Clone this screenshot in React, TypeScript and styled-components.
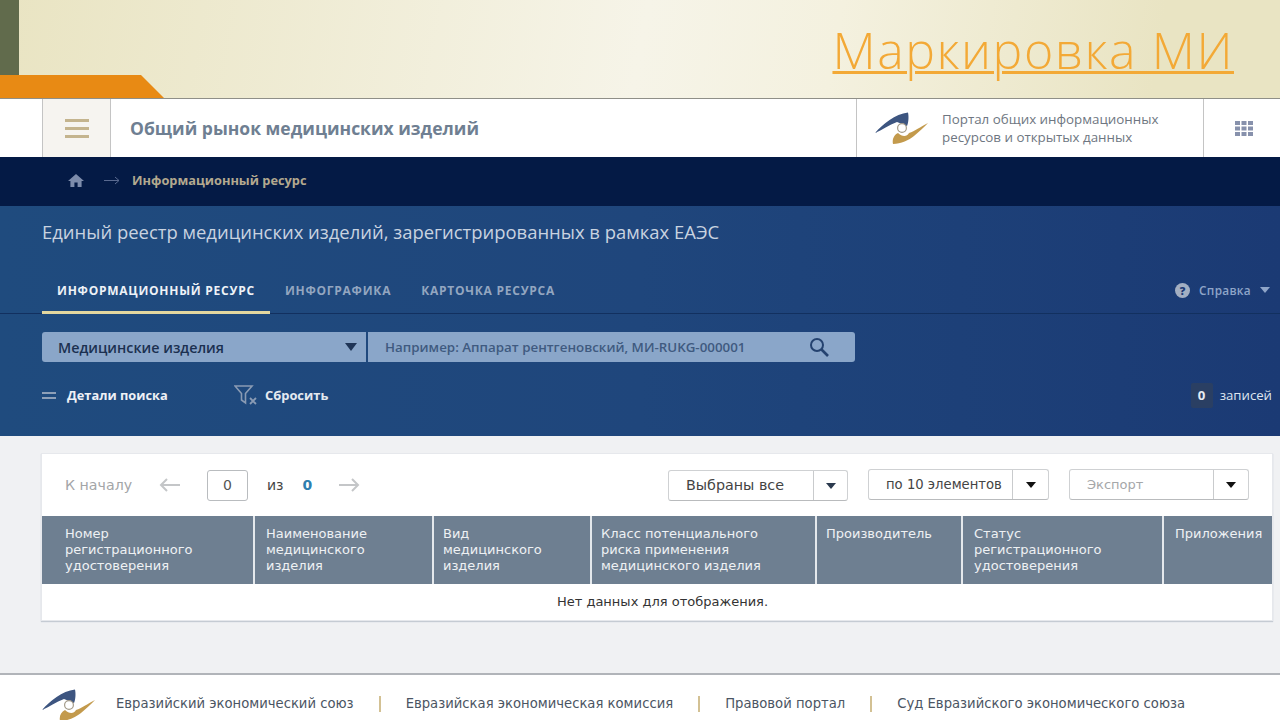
import React from 'react';
import styled, { createGlobalStyle } from 'styled-components';

const GlobalStyle = createGlobalStyle`
  html, body {
    margin: 0;
    padding: 0;
    background: #f0f1f3;
  }
  * {
    box-sizing: border-box;
  }
`;

const Logo = ({ width }: { width: number }) => (
  <svg width={width} viewBox="0 0 54 34" fill="none">
    <path d="M0 22C8 13 20 3 33 1.5C34 6 33.5 12 32 15L27 13L22 11C14 14 7 19 0 22Z" fill="#3d5580" />
    <path
      d="M53 12C45 16 40 20 34 22C32 26 27 26 23 22C19 24 17 28 18 33C26 33 34 29 39 25C44 21 49 16 53 12Z"
      fill="#c39a4c"
    />
    <circle cx="27" cy="17" r="4.4" fill="#fff" stroke="#a39a88" strokeWidth="1.2" />
  </svg>
);

const Caret = styled.span<{ $color?: string; $big?: boolean }>`
  width: 0;
  height: 0;
  border-left: ${(p) => (p.$big ? 6 : 5)}px solid transparent;
  border-right: ${(p) => (p.$big ? 6 : 5)}px solid transparent;
  border-top: ${(p) => (p.$big ? 8 : 6)}px solid ${(p) => p.$color || '#2b3a4e'};
`;

const columns = [
  { title: 'Номер\nрегистрационного\nудостоверения', width: 213, pad: 23 },
  { title: 'Наименование\nмедицинского\nизделия', width: 179, pad: 11 },
  { title: 'Вид\nмедицинского\nизделия', width: 158, pad: 9 },
  { title: 'Класс потенциального\nриска применения\nмедицинского изделия', width: 225, pad: 9 },
  { title: 'Производитель', width: 146, pad: 9 },
  { title: 'Статус\nрегистрационного\nудостоверения', width: 201, pad: 11 },
  { title: 'Приложения', width: 108, pad: 11 },
];

const footerLinks = [
  'Евразийский экономический союз',
  'Евразийская экономическая комиссия',
  'Правовой портал',
  'Суд Евразийского экономического союза',
];

const App = () => {
  return (
    <Page>
      <GlobalStyle />
      <SlideHeader>
        <Corner>
          <GreenStrip />
          <OrangeBar />
        </Corner>
        <SlideTitle>Маркировка МИ</SlideTitle>
      </SlideHeader>

      <TopNav>
        <MenuCell>
          <Burger>
            <i />
            <i />
            <i />
          </Burger>
        </MenuCell>
        <SiteTitle>Общий рынок медицинских изделий</SiteTitle>
        <PortalCell>
          <Logo width={54} />
          <PortalText>
            Портал общих информационных
            <br />
            ресурсов и открытых данных
          </PortalText>
        </PortalCell>
        <AppsCell>
          <svg width="18" height="15" viewBox="0 0 18 15" fill="#8791ac">
            {[0, 6.5, 13].map((x) =>
              [0, 5.5, 11].map((y) => <rect key={`${x}-${y}`} x={x} y={y} width="5" height="4" />),
            )}
          </svg>
        </AppsCell>
      </TopNav>

      <Breadcrumbs>
        <svg width="16" height="13" viewBox="0 0 16 13" fill="#7d8cab">
          <path d="M8 0L16 7H13.6V13H9.6V8.6H6.4V13H2.4V7H0Z" />
        </svg>
        <svg width="16" height="9" viewBox="0 0 16 9" fill="none" stroke="#5a6a90" strokeWidth="1">
          <path d="M0 4.5H15M11 1L15 4.5L11 8" />
        </svg>
        <CrumbText>Информационный ресурс</CrumbText>
      </Breadcrumbs>

      <BluePanel>
        <PanelTitle>Единый реестр медицинских изделий, зарегистрированных в рамках ЕАЭС</PanelTitle>
        <TabsRow>
          <Tab $active>Информационный ресурс</Tab>
          <Tab>Инфографика</Tab>
          <Tab>Карточка ресурса</Tab>
          <Help>
            <HelpMark>?</HelpMark>
            Справка
            <Caret $color="#8fa5c8" />
          </Help>
        </TabsRow>
        <SearchRow>
          <SearchSelect>
            Медицинские изделия
            <Caret $big $color="#1f3557" />
          </SearchSelect>
          <SearchInput>
            Например: Аппарат рентгеновский, МИ-RUKG-000001
            <svg width="20" height="20" viewBox="0 0 20 20" fill="none" stroke="#24426f" strokeWidth="2">
              <circle cx="8" cy="8" r="6" />
              <path d="M12.5 12.5L19 19" strokeWidth="2.6" />
            </svg>
          </SearchInput>
        </SearchRow>
        <ActionsRow>
          <DetailsAction>
            <DetailsIcon>
              <i />
              <i />
            </DetailsIcon>
            Детали поиска
          </DetailsAction>
          <ResetAction>
            <svg width="25" height="20" viewBox="0 0 25 20" fill="none" stroke="#8a9bb4" strokeWidth="1.6">
              <path d="M1 1H18L11.5 8.5V18L7.5 15V8.5Z" />
              <path d="M16 13L22 19M22 13L16 19" strokeWidth="1.8" />
            </svg>
            Сбросить
          </ResetAction>
          <Records>
            <RecordsBadge>0</RecordsBadge>
            записей
          </Records>
        </ActionsRow>
      </BluePanel>

      <Content>
        <Card>
          <Toolbar>
            <ToStart>К началу</ToStart>
            <svg width="22" height="14" viewBox="0 0 22 14" fill="none" stroke="#c4c6c8" strokeWidth="2">
              <path d="M21 7H2M8 1L2 7L8 13" />
            </svg>
            <PageBox>0</PageBox>
            <OfText>из</OfText>
            <OfCount>0</OfCount>
            <svg width="22" height="14" viewBox="0 0 22 14" fill="none" stroke="#c4c6c8" strokeWidth="2">
              <path d="M1 7H20M14 1L20 7L14 13" />
            </svg>
            <Dropdowns>
              <Dropdown $width={180} $shift={1}>
                <DropdownLabel $size={14.3}>Выбраны все</DropdownLabel>
                <DropdownArrow $width={34}>
                  <Caret />
                </DropdownArrow>
              </Dropdown>
              <Dropdown $width={181}>
                <DropdownLabel $size={13.2}>по 10 элементов</DropdownLabel>
                <DropdownArrow $width={36}>
                  <Caret $color="#111" />
                </DropdownArrow>
              </Dropdown>
              <Dropdown $width={180}>
                <DropdownLabel $size={13} $muted>
                  Экспорт
                </DropdownLabel>
                <DropdownArrow $width={35}>
                  <Caret $color="#111" />
                </DropdownArrow>
              </Dropdown>
            </Dropdowns>
          </Toolbar>
          <TableHead>
            {columns.map((col) => (
              <HeadCell key={col.title} $width={col.width} $pad={col.pad}>
                {col.title}
              </HeadCell>
            ))}
          </TableHead>
          <EmptyRow>Нет данных для отображения.</EmptyRow>
        </Card>
      </Content>

      <Footer>
        <FooterLogo>
          <Logo width={54} />
        </FooterLogo>
        {footerLinks.map((link) => (
          <FooterLink key={link}>{link}</FooterLink>
        ))}
      </Footer>
    </Page>
  );
};

const Page = styled.div`
  width: 1280px;
  height: 720px;
  overflow: hidden;
  display: flex;
  flex-direction: column;
  font-family: 'Open Sans', 'Liberation Sans', sans-serif;
`;

const SlideHeader = styled.div`
  height: 99px;
  flex: none;
  display: flex;
  justify-content: space-between;
  border-bottom: 1px solid #8f8f88;
  background: linear-gradient(100deg, #e9e4c2 0%, #f6f4e8 50%, #f4f1df 65%, #e9e4c3 90%);
`;

const Corner = styled.div`
  width: 164px;
  display: flex;
  flex-direction: column;
`;

const GreenStrip = styled.div`
  width: 19px;
  height: 75px;
  background: #616b4c;
`;

const OrangeBar = styled.div`
  height: 23px;
  background: #e88a14;
  clip-path: polygon(0 0, 141px 0, 100% 100%, 0 100%);
`;

const SlideTitle = styled.a`
  margin: 22px 46px 0 0;
  font-family: 'Open Sans', sans-serif;
  font-size: 50px;
  font-weight: 300;
  letter-spacing: 1.55px;
  line-height: 56px;
  height: 56px;
  color: #f3a936;
  text-decoration: underline;
  text-decoration-thickness: 3px;
  text-underline-offset: 2px;
`;

const TopNav = styled.div`
  height: 58px;
  flex: none;
  display: flex;
  align-items: stretch;
  background: #fff;
  padding-left: 42px;
`;

const MenuCell = styled.div`
  width: 69px;
  display: flex;
  align-items: center;
  justify-content: center;
  background: #f6f4f0;
  border-left: 1px solid #c4c4c4;
  border-right: 1px solid #c4c4c4;
`;

const Burger = styled.div`
  width: 24px;
  display: flex;
  flex-direction: column;
  gap: 5px;

  & i {
    display: block;
    height: 3px;
    background: #c4b48e;
  }
`;

const SiteTitle = styled.div`
  flex: 1;
  padding-left: 19px;
  font-size: 17.5px;
  line-height: 58px;
  font-weight: 700;
  color: #6f7f92;
`;

const PortalCell = styled.div`
  width: 348px;
  display: flex;
  align-items: center;
  gap: 13px;
  padding: 0 0 0 18px;
  border-left: 1px solid #c4c4c4;
  border-right: 1px solid #c4c4c4;
`;

const PortalText = styled.div`
  font-size: 13.35px;
  line-height: 18px;
  color: #6e7681;
  white-space: nowrap;
`;

const AppsCell = styled.div`
  width: 76px;
  display: flex;
  align-items: center;
  justify-content: center;
  padding-left: 4px;
`;

const Breadcrumbs = styled.div`
  height: 49px;
  flex: none;
  display: flex;
  align-items: center;
  padding: 0 0 3px 68px;
  gap: 20px;
  background: #041a45;
`;

const CrumbText = styled.span`
  margin-left: -8px;
  font-size: 12.8px;
  font-weight: 700;
  color: #b3a98f;
`;

const BluePanel = styled.div`
  height: 230px;
  flex: none;
  background: linear-gradient(90deg, #1f4b7e 0%, #1f467c 50%, #1b3a74 100%);
`;

const PanelTitle = styled.div`
  padding: 14px 0 0 42px;
  height: 61px;
  font-size: 18.45px;
  line-height: 23px;
  color: #c9d3e0;
  white-space: nowrap;
`;

const TabsRow = styled.div`
  height: 47px;
  display: flex;
  align-items: stretch;
  padding-left: 42px;
  border-bottom: 1px solid #12305f;
`;

const Tab = styled.div<{ $active?: boolean }>`
  padding: 0 15px;
  line-height: 47px;
  height: 47px;
  font-size: 12px;
  font-weight: 700;
  letter-spacing: 0.75px;
  text-transform: uppercase;
  color: ${(p) => (p.$active ? '#eef2f7' : '#93a6c0')};
  border-bottom: ${(p) => (p.$active ? '3px solid #e3d79f' : 'none')};
`;

const Help = styled.div`
  margin-left: auto;
  padding-right: 10px;
  display: flex;
  align-items: center;
  gap: 9px;
  font-size: 11.8px;
  font-weight: 600;
  letter-spacing: 0.3px;
  color: #8fa5c8;
`;

const HelpMark = styled.span`
  width: 15px;
  height: 15px;
  border-radius: 50%;
  background: #a3afc2;
  color: #1c3a74;
  font-size: 11px;
  font-weight: 800;
  line-height: 15px;
  text-align: center;
`;

const SearchRow = styled.div`
  display: flex;
  gap: 2px;
  margin: 18px 0 0 42px;
  width: 813px;
  height: 30px;
`;

const SearchSelect = styled.div`
  width: 324px;
  display: flex;
  align-items: center;
  justify-content: space-between;
  padding: 0 9px 0 16px;
  background: #8aa6c9;
  border-radius: 3px 0 0 3px;
  font-size: 14.3px;
  font-weight: 600;
  color: #1b3050;
`;

const SearchInput = styled.div`
  flex: 1;
  display: flex;
  align-items: center;
  justify-content: space-between;
  padding: 0 26px 0 17px;
  background: #8aa6c9;
  border-radius: 0 3px 3px 0;
  font-size: 13.35px;
  font-weight: 600;
  color: #3f5a80;
`;

const ActionsRow = styled.div`
  display: flex;
  align-items: center;
  height: 40px;
  margin-top: 13px;
  padding-left: 42px;
`;

const DetailsAction = styled.div`
  width: 192px;
  display: flex;
  align-items: center;
  gap: 11px;
  font-size: 12.8px;
  font-weight: 700;
  color: #eef1f6;
`;

const DetailsIcon = styled.span`
  width: 14px;
  display: flex;
  flex-direction: column;
  gap: 3px;

  & i {
    display: block;
    height: 2px;
    background: #8ea0b8;
  }
`;

const ResetAction = styled.div`
  display: flex;
  align-items: center;
  gap: 6px;
  font-size: 12.9px;
  font-weight: 700;
  color: #e4e9f0;
`;

const Records = styled.div`
  margin-left: auto;
  padding-right: 8px;
  display: flex;
  align-items: center;
  gap: 7px;
  font-size: 13.2px;
  color: #dfe6f0;
`;

const RecordsBadge = styled.span`
  width: 22px;
  height: 25px;
  background: #2a3f63;
  border-radius: 2px;
  font-weight: 700;
  line-height: 25px;
  text-align: center;
  color: #e6ebf2;
`;

const Content = styled.div`
  height: 239px;
  flex: none;
  padding: 18px 8px 0 42px;
  background: #f0f1f3;
  border-bottom: 2px solid #b1b4b9;
`;

const Card = styled.div`
  height: 166px;
  background: #fff;
  box-shadow: 0 0 0 1px #e6e8ec, 0 1px 1px 1px #c5cbd3;
  font-family: 'DejaVu Sans', Verdana, sans-serif;
`;

const Toolbar = styled.div`
  height: 62px;
  display: flex;
  align-items: center;
  padding: 0 23px;
`;

const ToStart = styled.span`
  width: 94px;
  font-size: 14.2px;
  color: #a3a5a7;
  white-space: nowrap;
`;

const PageBox = styled.div`
  width: 41px;
  height: 31px;
  margin-left: 26px;
  border: 1px solid #b9bcbf;
  border-radius: 3px;
  font-size: 14px;
  line-height: 28px;
  text-align: center;
  color: #555;
`;

const OfText = styled.span`
  margin-left: 19px;
  font-size: 14px;
  color: #444;
`;

const OfCount = styled.span`
  margin-left: 19px;
  margin-right: 26px;
  font-size: 14px;
  font-weight: 600;
  color: #2f7fb0;
`;

const Dropdowns = styled.div`
  margin-left: auto;
  display: flex;
  gap: 20px;
`;

const Dropdown = styled.div<{ $width: number; $shift?: number }>`
  width: ${(p) => p.$width}px;
  height: 31px;
  margin-top: ${(p) => p.$shift || 0}px;
  display: flex;
  border: 1px solid #cfd1d3;
  border-bottom-color: #b9bbbd;
  border-radius: 3px;
  background: #fff;
`;

const DropdownLabel = styled.div<{ $muted?: boolean; $size: number }>`
  flex: 1;
  padding-left: 17px;
  font-size: ${(p) => p.$size}px;
  line-height: 29px;
  white-space: nowrap;
  color: ${(p) => (p.$muted ? '#a5a7a9' : '#444')};
`;

const DropdownArrow = styled.div<{ $width: number }>`
  width: ${(p) => p.$width}px;
  display: flex;
  align-items: center;
  justify-content: center;
  border-left: 1px solid #c9cbcd;
`;

const TableHead = styled.div`
  height: 68px;
  display: flex;
  background: #6e7f91;
`;

const HeadCell = styled.div<{ $width: number; $pad: number }>`
  width: ${(p) => p.$width}px;
  padding: 10px 0 0 ${(p) => p.$pad}px;
  border-right: 2px solid #e4e8ec;
  font-size: 13px;
  line-height: 16px;
  color: #eef1f4;
  white-space: pre-line;

  &:last-child {
    border-right: none;
  }
`;

const EmptyRow = styled.div`
  height: 36px;
  font-size: 13px;
  line-height: 36px;
  text-align: center;
  padding-left: 11px;
  color: #333;
  white-space: nowrap;
`;

const Footer = styled.div`
  height: 45px;
  flex: none;
  display: flex;
  align-items: flex-start;
  background: #fff;
  padding-left: 42px;
  overflow: hidden;
`;

const FooterLogo = styled.div`
  width: 74px;
  padding-top: 13px;
`;

const FooterLink = styled.a`
  margin-top: 21px;
  font-family: 'DejaVu Sans', Verdana, sans-serif;
  font-size: 13.2px;
  line-height: 16px;
  white-space: nowrap;
  color: #4b5563;
  padding-right: 25px;
  margin-right: 25px;
  border-right: 2px solid #d3c194;

  &:last-child {
    border-right: none;
  }
`;

export default App;
